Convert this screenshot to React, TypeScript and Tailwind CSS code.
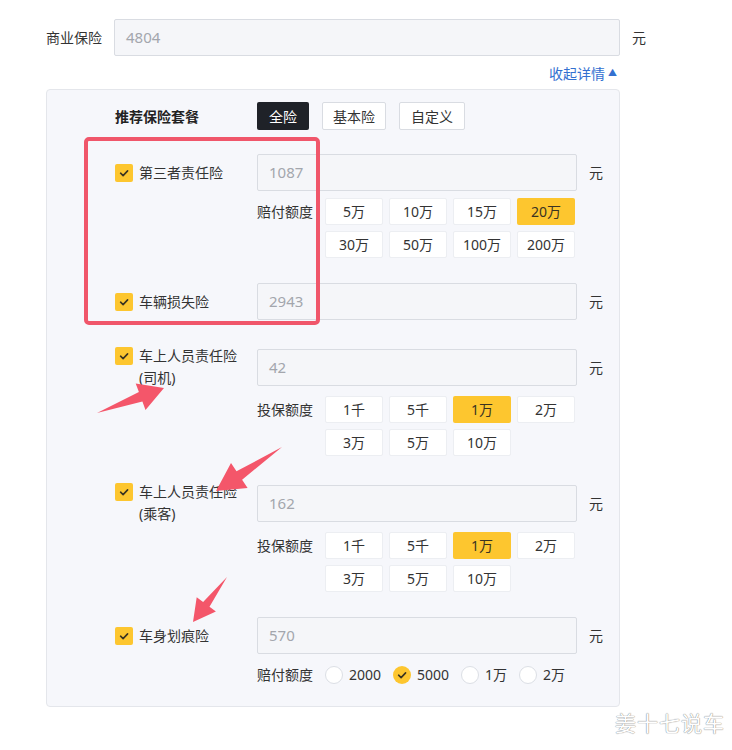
import type { ReactNode } from "react";

const FONT = { fontFamily: '"Noto Sans", "Noto Sans CJK SC", sans-serif' };

interface Coverage {
  name: string;
  sub?: string;
  amount: string;
  optionLabel?: string;
  options?: string[];
  active?: string;
  radios?: string[];
}

const COVERAGES: Coverage[] = [
  {
    name: "第三者责任险",
    amount: "1087",
    optionLabel: "赔付额度",
    options: ["5万", "10万", "15万", "20万", "30万", "50万", "100万", "200万"],
    active: "20万",
  },
  { name: "车辆损失险", amount: "2943" },
  {
    name: "车上人员责任险",
    sub: "(司机)",
    amount: "42",
    optionLabel: "投保额度",
    options: ["1千", "5千", "1万", "2万", "3万", "5万", "10万"],
    active: "1万",
  },
  {
    name: "车上人员责任险",
    sub: "(乘客)",
    amount: "162",
    optionLabel: "投保额度",
    options: ["1千", "5千", "1万", "2万", "3万", "5万", "10万"],
    active: "1万",
  },
  {
    name: "车身划痕险",
    amount: "570",
    optionLabel: "赔付额度",
    radios: ["2000", "5000", "1万", "2万"],
    active: "5000",
  },
];

function CheckMark() {
  return (
    <svg viewBox="0 0 18 18" className="h-[18px] w-[18px]" aria-hidden>
      <path
        d="M5.6 9.2 8.1 11.6 12.6 6.9"
        fill="none"
        stroke="#3a3322"
        strokeWidth="1.6"
        strokeLinecap="round"
        strokeLinejoin="round"
      />
    </svg>
  );
}

function Checkbox() {
  return (
    <span className="flex h-[18px] w-[18px] shrink-0 items-center justify-center rounded-[2px] bg-[#fdc62f]">
      <CheckMark />
    </span>
  );
}

function AmountInput({ value, width }: { value: string; width: string }) {
  return (
    <div
      className={`flex h-[37px] shrink-0 ${width} items-center rounded-[2px] border border-[#d9dce2] bg-[#f5f6f9] pl-[11px] text-[15px] text-[#a3a6ad]`}
    >
      {value}
    </div>
  );
}

function OptionGrid({ options, active }: { options: string[]; active?: string }) {
  return (
    <div className="grid grid-cols-[repeat(4,58px)] gap-x-[6px] gap-y-[6px]">
      {options.map((opt) => (
        <div
          key={opt}
          className={[
            "flex h-[27px] items-center justify-center rounded-[2px] text-[14px]",
            opt === active
              ? "bg-[#fdc62f] text-[#3a3322]"
              : "border border-[#eceef2] bg-white text-[#333]",
          ].join(" ")}
        >
          {opt}
        </div>
      ))}
    </div>
  );
}

function RadioGroup({ options, active }: { options: string[]; active?: string }) {
  return (
    <div className="flex items-center gap-[12px]">
      {options.map((opt) => (
        <div key={opt} className="flex items-center gap-[6px] text-[14px] text-[#333]">
          {opt === active ? (
            <span className="flex h-[18px] w-[18px] items-center justify-center rounded-full bg-[#fdc62f]">
              <CheckMark />
            </span>
          ) : (
            <span className="h-[18px] w-[18px] rounded-full border border-[#dcdfe5] bg-white" />
          )}
          <span>{opt}</span>
        </div>
      ))}
    </div>
  );
}

function CoverageItem({ item, first }: { item: Coverage; first: boolean }) {
  return (
    <div className={first ? "" : "mt-[25px]"}>
      <div className="flex items-center">
        <div className="flex w-[142px] shrink-0 items-start gap-[6px]">
          <span className="mt-[2px]">
            <Checkbox />
          </span>
          <div className="text-[14px] leading-[22px] text-[#333]">
            <div>{item.name}</div>
            {item.sub && <div>{item.sub}</div>}
          </div>
        </div>
        <AmountInput value={item.amount} width="w-[320px]" />
        <span className="ml-[12px] text-[14px] text-[#333]">元</span>
      </div>
      {item.optionLabel && (
        <div
          className={`ml-[142px] flex gap-[12px] ${item.radios ? "mt-[7px] items-center" : "mt-[7px] items-start"}`}
        >
          <span className="flex h-[27px] w-[56px] items-center text-[14px] text-[#333]">
            {item.optionLabel}
          </span>
          {item.options && <OptionGrid options={item.options} active={item.active} />}
          {item.radios && <RadioGroup options={item.radios} active={item.active} />}
        </div>
      )}
    </div>
  );
}

function PackageButton({ children, active, width }: { children: ReactNode; active?: boolean; width: string }) {
  return (
    <div
      className={[
        "flex h-[28px] items-center justify-center rounded-[2px] text-[14px]",
        width,
        active ? "bg-[#1f2228] text-white" : "border border-[#d9dce2] bg-white text-[#333]",
      ].join(" ")}
    >
      {children}
    </div>
  );
}

// tapered arrow: tail point, shaft edge, wing, tip, wing, shaft edge
const ARROWS = [
  "97,413 138.9,392.1 135.7,383.6 164,388 145.5,409.9 142.4,401.4",
  "282,447 236.5,471.3 231,463 216,491 247.6,488 242.1,479.7",
  "227,577 203.1,602 196.7,597.2 193,622 215.9,611.6 209.5,606.8",
];

export default function App() {
  return (
    <div className="relative h-[750px] w-[732px] overflow-hidden bg-white pl-[46px] pt-[19px]" style={FONT}>
      <div className="w-[574px]">
        <div className="flex items-center">
          <span className="w-[68px] shrink-0 text-[14px] text-[#333]">商业保险</span>
          <AmountInput value="4804" width="w-[506px]" />
          <span className="ml-[12px] shrink-0 text-[14px] text-[#333]">元</span>
        </div>

        <div className="mt-[7px] flex h-[20px] items-center justify-end gap-[3px] pr-[3px] text-[14px] text-[#3370d0]">
          <span>收起详情</span>
          <span className="text-[9px]">▲</span>
        </div>

        <section className="mt-[6px] rounded-[4px] border border-[#e4e6eb] bg-[#f6f7fb] pb-[18px] pl-[68px] pt-[12px]">
          <div className="mb-[24px] flex items-center">
            <span className="w-[142px] text-[14px] font-bold text-[#222]">推荐保险套餐</span>
            <div className="flex gap-[13px]">
              <PackageButton active width="w-[52px]">全险</PackageButton>
              <PackageButton width="w-[64px]">基本险</PackageButton>
              <PackageButton width="w-[66px]">自定义</PackageButton>
            </div>
          </div>

          {COVERAGES.map((item, i) => (
            <CoverageItem key={item.name + (item.sub ?? "")} item={item} first={i === 0} />
          ))}
        </section>
      </div>

      {/* annotations drawn over the form */}
      <div className="pointer-events-none absolute left-[84px] top-[137px] h-[188px] w-[236px] rounded-[5px] border-[4px] border-[#f0566a]" />
      <svg className="pointer-events-none absolute left-0 top-0" width="732" height="750" aria-hidden>
        {ARROWS.map((pts) => (
          <polygon key={pts} points={pts} fill="#f4566a" />
        ))}
      </svg>

      <div
        className="absolute left-[615px] top-[708px] text-[21px] tracking-[1px] text-white"
        style={{ textShadow: "0 0 1px #8a8a8a, 0 0 1px #8a8a8a" }}
      >
        姜十七说车
      </div>
    </div>
  );
}
